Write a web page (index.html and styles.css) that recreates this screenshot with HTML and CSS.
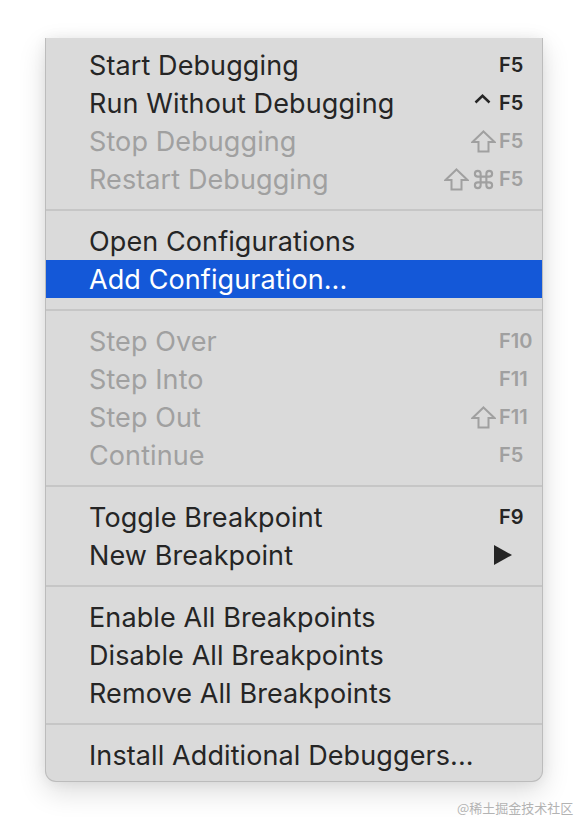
FILE: index.html
```html
<!DOCTYPE html>
<html>
<head>
<meta charset="utf-8">
<link rel="stylesheet" href="styles.css">
</head>
<body>
<div class="menu">
  <div class="item"><span class="label">Start Debugging</span><span class="mods"></span><span class="key">F5</span></div>
  <div class="item"><span class="label">Run Without Debugging</span><span class="mods"><svg class="caret" width="17" height="10" viewBox="0 0 17 10"><path d="M1.5 8.5 L8.5 1.8 L15.5 8.5" fill="none" stroke="currentColor" stroke-width="2.5"/></svg></span><span class="key">F5</span></div>
  <div class="item disabled"><span class="label">Stop Debugging</span><span class="mods"><svg class="shift" width="25" height="23" viewBox="0 0 25 23"><path d="M12.5 1.5 L23.5 12 H17.5 V21.5 H7.5 V12 H1.5 Z" fill="none" stroke="currentColor" stroke-width="2"/></svg></span><span class="key">F5</span></div>
  <div class="item disabled"><span class="label">Restart Debugging</span><span class="mods"><svg class="shift" width="25" height="23" viewBox="0 0 25 23"><path d="M12.5 1.5 L23.5 12 H17.5 V21.5 H7.5 V12 H1.5 Z" fill="none" stroke="currentColor" stroke-width="2"/></svg><svg class="cmd" width="25" height="23" viewBox="0 0 24 24"><path d="M18 3a3 3 0 0 0-3 3v12a3 3 0 0 0 3 3 3 3 0 0 0 3-3 3 3 0 0 0-3-3H6a3 3 0 0 0-3 3 3 3 0 0 0 3 3 3 3 0 0 0 3-3V6a3 3 0 0 0-3-3 3 3 0 0 0-3 3 3 3 0 0 0 3 3h12a3 3 0 0 0 3-3 3 3 0 0 0-3-3z" fill="none" stroke="currentColor" stroke-width="2.2"/></svg></span><span class="key">F5</span></div>
  <div class="sep"></div>
  <div class="item"><span class="label">Open Configurations</span></div>
  <div class="item active"><span class="label">Add Configuration...</span></div>
  <div class="sep"></div>
  <div class="item disabled"><span class="label">Step Over</span><span class="mods"></span><span class="key">F10</span></div>
  <div class="item disabled"><span class="label">Step Into</span><span class="mods"></span><span class="key">F11</span></div>
  <div class="item disabled"><span class="label">Step Out</span><span class="mods"><svg class="shift" width="25" height="23" viewBox="0 0 25 23"><path d="M12.5 1.5 L23.5 12 H17.5 V21.5 H7.5 V12 H1.5 Z" fill="none" stroke="currentColor" stroke-width="2"/></svg></span><span class="key">F11</span></div>
  <div class="item disabled"><span class="label">Continue</span><span class="mods"></span><span class="key">F5</span></div>
  <div class="sep"></div>
  <div class="item"><span class="label">Toggle Breakpoint</span><span class="mods"></span><span class="key">F9</span></div>
  <div class="item"><span class="label">New Breakpoint</span><span class="mods"></span><span class="key"><svg class="arrow" width="18" height="20" viewBox="0 0 18 20"><polygon points="0,0 18,10 0,20" fill="currentColor"/></svg></span></div>
  <div class="sep"></div>
  <div class="item"><span class="label">Enable All Breakpoints</span></div>
  <div class="item"><span class="label">Disable All Breakpoints</span></div>
  <div class="item"><span class="label">Remove All Breakpoints</span></div>
  <div class="sep"></div>
  <div class="item"><span class="label">Install Additional Debuggers...</span></div>
</div>
<div class="watermark">@稀土掘金技术社区</div>
</body>
</html>
```

FILE: styles.css
```css
html, body {
  margin: 0;
  padding: 0;
  background: #ffffff;
}
body {
  width: 588px;
  height: 836px;
  position: relative;
  overflow: hidden;
  font-family: Inter, "Noto Sans", "Liberation Sans", sans-serif;
}
.menu {
  margin: 38px 0 0 45px;
  width: 496px;
  background: #dadada;
  border: 1px solid #bcbcbc;
  border-top: none;
  border-radius: 0 0 11px 11px;
  padding: 8px 0 7px 0;
  box-shadow: 0 10px 28px rgba(0, 0, 0, 0.14), 0 0 14px rgba(0, 0, 0, 0.06);
}
.item {
  height: 38px;
  display: flex;
  align-items: center;
  padding-left: 43px;
  color: #252525;
}
.item.disabled {
  color: #a0a0a0;
}
.item.active {
  background: #1458d8;
  color: #ffffff;
}
.label {
  flex: 1;
  font-size: 27px;
  letter-spacing: 0.1px;
  white-space: nowrap;
}
.mods {
  display: flex;
  align-items: center;
  gap: 2px;
  margin-right: 3px;
}
.key {
  width: 43px;
  font-size: 20px;
  font-weight: 600;
  display: flex;
  align-items: center;
}
.caret {
  display: block;
  margin-top: -9px;
  margin-right: 5px;
}
.shift, .cmd {
  display: block;
}
.arrow {
  display: block;
  margin-left: -5px;
}
.sep {
  height: 24px;
  display: flex;
  align-items: center;
}
.sep::before {
  content: "";
  display: block;
  width: 100%;
  height: 2px;
  background: #c6c6c6;
}
.watermark {
  position: absolute;
  left: 457px;
  top: 798px;
  font-family: "Noto Sans CJK SC", sans-serif;
  font-size: 13px;
  color: #b3b3b3;
  white-space: nowrap;
}
```
